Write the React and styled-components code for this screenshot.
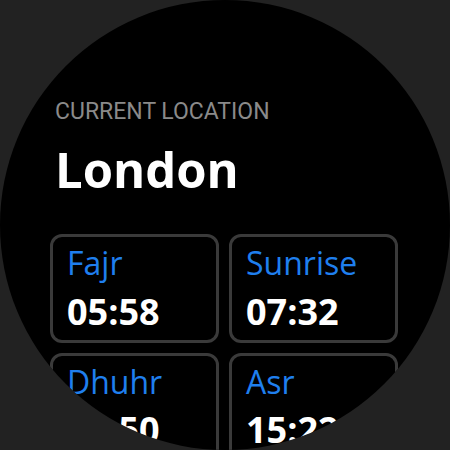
import React from "react";
import styled, { createGlobalStyle } from "styled-components";

const Global = createGlobalStyle`
  html, body { margin: 0; padding: 0; background: #222222; }
  body { width: 450px; height: 450px; overflow: hidden; }
`;

const Watch = styled.div`
  width: 450px;
  height: 450px;
  border-radius: 50%;
  background: #000;
  overflow: hidden;
  box-sizing: border-box;
  padding: 98px 52px 0 50px;
`;

const Header = styled.header`
  display: flex;
  flex-direction: column;
  gap: 14px;
  padding-left: 5px;
  margin-bottom: 36px;
`;

const Caption = styled.div`
  font-family: Roboto, "Liberation Sans", sans-serif;
  font-size: 23px;
  line-height: 1.2;
  color: #8a8a8a;
  text-transform: uppercase;
`;

const City = styled.h1`
  margin: 0;
  font-family: "Open Sans", "Noto Sans", sans-serif;
  font-weight: 700;
  font-size: 49px;
  line-height: 1.2;
  color: #ffffff;
`;

const Grid = styled.div`
  display: grid;
  grid-template-columns: repeat(2, 1fr);
  gap: 10px;
  width: 348px;
`;

const Card = styled.div`
  box-sizing: border-box;
  border: 3px solid #3a3a3a;
  border-radius: 12px;
  padding: 7px 14px;
  display: flex;
  flex-direction: column;
  gap: 7px;
`;

const Name = styled.div`
  font-family: "Open Sans", "Noto Sans", sans-serif;
  font-size: 32px;
  line-height: 1.2;
  color: #1f7fee;
`;

const Time = styled.div`
  font-family: "Open Sans", "Noto Sans", sans-serif;
  font-weight: 700;
  font-size: 36px;
  line-height: 1.2;
  color: #ffffff;
`;

const prayers = [
  { name: "Fajr", time: "05:58" },
  { name: "Sunrise", time: "07:32" },
  { name: "Dhuhr", time: "12:50" },
  { name: "Asr", time: "15:22" },
  { name: "Maghrib", time: "18:05" },
  { name: "Isha", time: "19:40" },
];

export default function App() {
  return (
    <>
      <Global />
      <Watch>
        <Header>
          <Caption>Current Location</Caption>
          <City>London</City>
        </Header>
        <Grid>
          {prayers.map((p) => (
            <Card key={p.name}>
              <Name>{p.name}</Name>
              <Time>{p.time}</Time>
            </Card>
          ))}
        </Grid>
      </Watch>
    </>
  );
}
